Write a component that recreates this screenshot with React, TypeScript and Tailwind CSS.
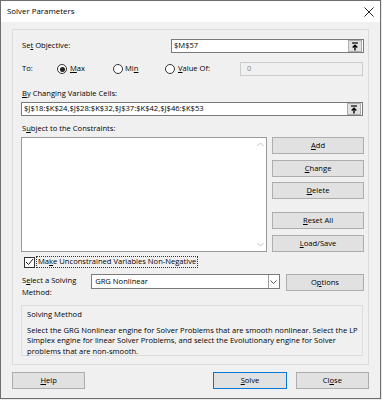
import React, { FC, ReactNode } from "react";

const font = { fontFamily: '"Segoe UI", "Open Sans", sans-serif' };

// underline the access-key letter
const Key: FC<{ children: ReactNode }> = ({ children }) => (
  <span className="underline underline-offset-[1px]">{children}</span>
);

const UpButton: FC = () => (
  <div className="w-[14px] h-[12px] border border-[#adadad] bg-[#e1e1e1] flex items-center justify-center mr-[1px]">
    <svg width="8" height="9" viewBox="0 0 8 9">
      <path d="M1 1h6" stroke="#000" strokeWidth="1.2" />
      <path d="M4 8.5V3.2M1.7 5.5L4 3.2l2.3 2.3" stroke="#000" strokeWidth="1.4" fill="none" />
    </svg>
  </div>
);

const Radio: FC<{ checked?: boolean }> = ({ checked }) => (
  <span className="w-[10px] h-[10px] rounded-full border border-[#333] bg-white flex items-center justify-center">
    {checked && <span className="w-[5px] h-[5px] rounded-full bg-[#222]" />}
  </span>
);

const Btn: FC<{ children: ReactNode; className?: string }> = ({ children, className = "" }) => (
  <div
    className={`flex items-center justify-center bg-[#e1e1e1] border border-[#adadad] text-black ${className}`}
  >
    {children}
  </div>
);

export default function App() {
  return (
    <div className="w-[382px] h-[400px] bg-[#e9e9e9]" style={font}>
      <div className="w-[381px] h-[399px] border border-[#6e6e6e] bg-[#f0f0f0] flex flex-col text-[7.6px] font-medium text-black leading-none">
        {/* title bar */}
        <div className="h-[21px] bg-white flex items-center justify-between pl-[6px] pr-[6px]">
          <span className="text-[7.9px]">Solver Parameters</span>
          <svg width="10" height="10" viewBox="0 0 10 10">
            <path d="M0.5 0.5l9 9M9.5 0.5l-9 9" stroke="#222" strokeWidth="1" />
          </svg>
        </div>

        <div className="px-[11px] pt-[7px] flex flex-col">
          {/* main panel */}
          <div className="h-[336px] border border-[#dcdcdc] bg-[#f0f0f0] pl-[9px] pr-[4px] pt-[9px] flex flex-col">
            {/* set objective */}
            <div className="flex items-center h-[14px]">
              <span className="w-[148px]">
                Se<Key>t</Key> Objective:
              </span>
              <div className="ml-[1px] w-[193px] h-[14px] bg-white border border-[#7a7a7a] flex items-center justify-between pl-[2px]">
                <span>$M$57</span>
                <UpButton />
              </div>
            </div>

            {/* to */}
            <div className="flex items-center h-[14px] mt-[9px]">
              <span className="w-[35px]">To:</span>
              <div className="flex items-center w-[56px]">
                <Radio checked />
                <span className="ml-[3px]">
                  <Key>M</Key>ax
                </span>
              </div>
              <div className="flex items-center w-[52px]">
                <Radio />
                <span className="ml-[2px]">
                  Mi<Key>n</Key>
                </span>
              </div>
              <div className="flex items-center w-[75px]">
                <Radio />
                <span className="ml-[3px]">
                  <Key>V</Key>alue Of:
                </span>
              </div>
              <div className="w-[123px] h-[14px] bg-[#f0f0f0] border border-[#cccccc] flex items-center pl-[6px] text-[#8a8a8a]">
                0
              </div>
            </div>

            {/* by changing */}
            <div className="mt-[12px] h-[11px] flex items-center">
              <span>
                <Key>B</Key>y Changing Variable Cells:
              </span>
            </div>
            <div className="mt-[3px] w-[342px] h-[14px] bg-white border border-[#7a7a7a] flex items-center justify-between pl-[2px] -ml-[1px]">
              <span>$J$18:$K$24,$J$28:$K$32,$J$37:$K$42,$J$46:$K$53</span>
              <UpButton />
            </div>

            {/* constraints */}
            <div className="mt-[7px] h-[11px] flex items-center">
              <span>
                S<Key>u</Key>bject to the Constraints:
              </span>
            </div>
            <div className="mt-[3px] flex">
              <div className="w-[249px] h-[115px] bg-white border border-[#9a9a9a] flex justify-end -ml-[1px]">
                <div className="w-[12px] flex flex-col justify-between items-center py-[4px]">
                  <svg width="7" height="5" viewBox="0 0 7 5">
                    <path d="M0.5 4L3.5 1l3 3" stroke="#c4c4c4" fill="none" />
                  </svg>
                  <svg width="7" height="5" viewBox="0 0 7 5">
                    <path d="M0.5 1l3 3 3-3" stroke="#c4c4c4" fill="none" />
                  </svg>
                </div>
              </div>
              <div className="ml-[5px] w-[93px] flex flex-col">
                <Btn className="h-[17px]">
                  <Key>A</Key>dd
                </Btn>
                <Btn className="h-[17px] mt-[6px]">
                  <Key>C</Key>hange
                </Btn>
                <Btn className="h-[17px] mt-[5px]">
                  <Key>D</Key>elete
                </Btn>
                <Btn className="h-[17px] mt-[13px]">
                  <Key>R</Key>eset All
                </Btn>
                <Btn className="h-[17px] mt-[6px]">
                  <Key>L</Key>oad/Save
                </Btn>
              </div>
            </div>

            {/* checkbox */}
            <div className="mt-[4px] flex items-center h-[12px]">
              <span className="ml-[2px] w-[11px] h-[11px] border border-[#333] bg-white flex items-center justify-center">
                <svg width="9" height="8" viewBox="0 0 9 8">
                  <path d="M1 4l2.5 2.5L8 1" stroke="#222" strokeWidth="1" fill="none" />
                </svg>
              </span>
              <span className="ml-[1px] px-[1px] h-[12px] flex items-center border border-dotted border-[#333]">
                Ma<Key>k</Key>e Unconstrained Variables Non-Negative
              </span>
            </div>

            {/* solving method select */}
            <div className="mt-[6px] flex items-start h-[17px]">
              <div className="w-[70px] pt-[3px] flex flex-col gap-[4px]">
                <span>
                  S<Key>e</Key>lect a Solving
                </span>
                <span>Method:</span>
              </div>
              <div className="w-[191px] h-[15px] bg-white border border-[#7a7a7a] flex items-center justify-between pl-[3px]">
                <span>GRG Nonlinear</span>
                <div className="w-[11px] h-full border-l border-[#a0a0a0] flex items-center justify-center">
                  <svg width="7" height="4" viewBox="0 0 7 4">
                    <path d="M0.5 0.5l3 3 3-3" stroke="#555" fill="none" />
                  </svg>
                </div>
              </div>
              <Btn className="ml-[6px] w-[79px] h-[17px]">
                O<Key>p</Key>tions
              </Btn>
            </div>

            {/* solving method description */}
            <div className="mt-[14px] w-[342px] h-[51px] -ml-[1px] border border-[#dcdcdc] pl-[5px] pt-[5px] flex flex-col">
              <span>Solving Method</span>
              <p className="mt-[6px] leading-[10.5px] whitespace-nowrap">
                Select the GRG Nonlinear engine for Solver Problems that are smooth nonlinear. Select the LP
                <br />
                Simplex engine for linear Solver Problems, and select the Evolutionary engine for Solver
                <br />
                problems that are non-smooth.
              </p>
            </div>
          </div>

          {/* bottom buttons */}
          <div className="mt-[7px] flex items-center">
            <Btn className="w-[74px] h-[17px]">
              <Key>H</Key>elp
            </Btn>
            <Btn className="ml-[128px] w-[74px] h-[17px] !border-[#0078d7] border-[1.5px]">
              <Key>S</Key>olve
            </Btn>
            <Btn className="ml-[9px] w-[74px] h-[17px]">
              Cl<Key>o</Key>se
            </Btn>
          </div>
        </div>
      </div>
    </div>
  );
}
